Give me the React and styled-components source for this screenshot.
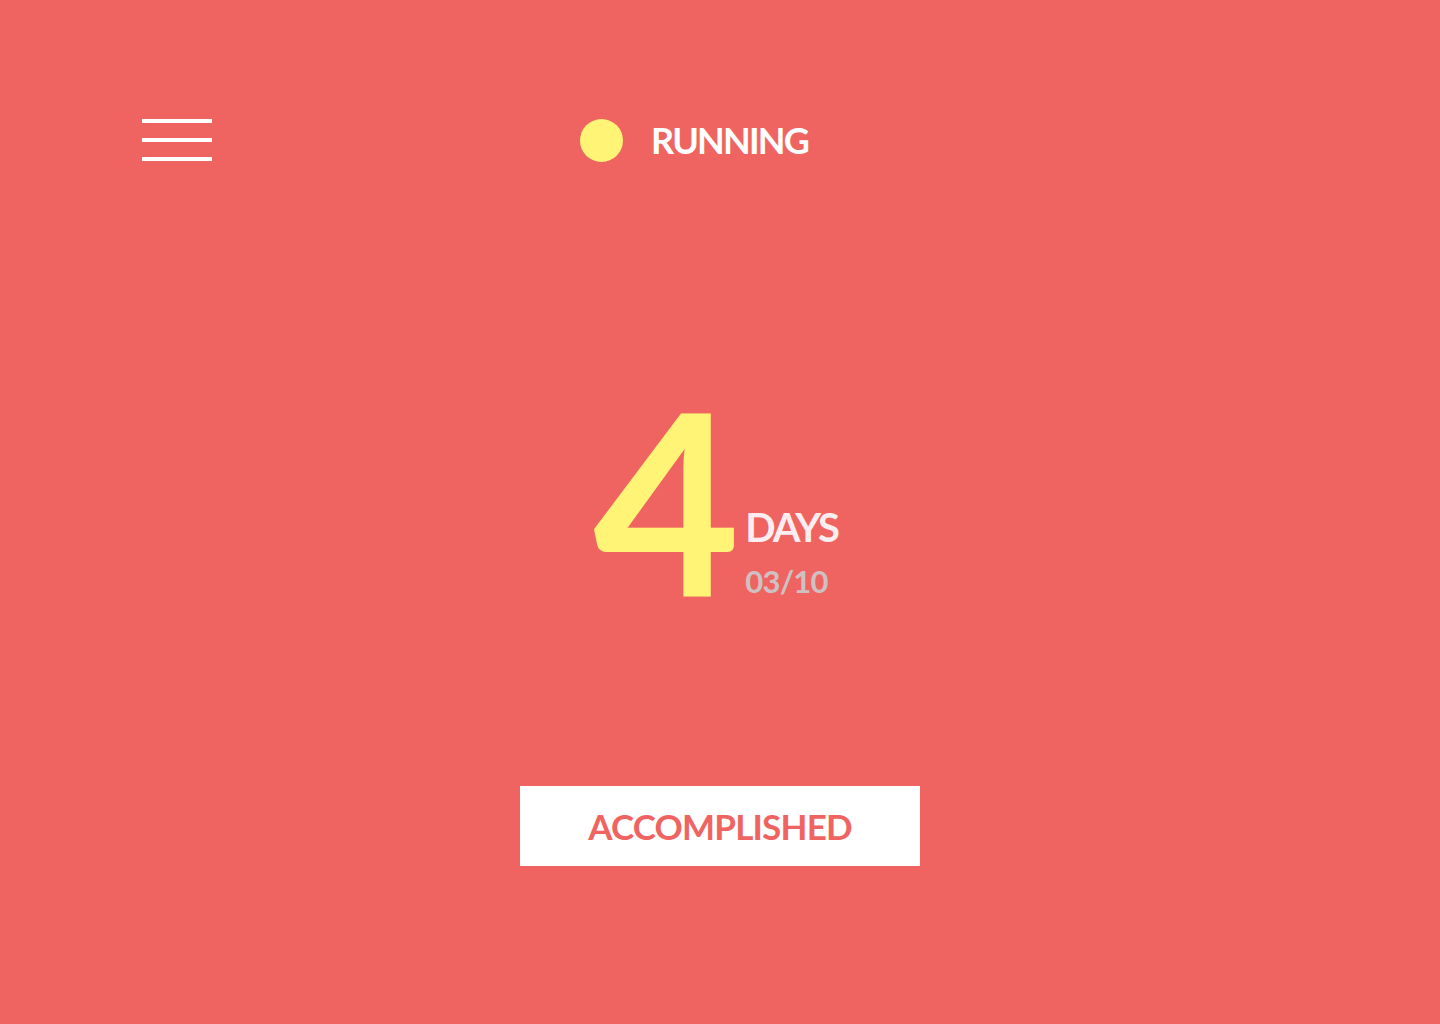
import React from "react";
import styled, { createGlobalStyle } from "styled-components";

const Global = createGlobalStyle`
  html, body { margin: 0; padding: 0; background: #EF6461; }
  body { font-family: "Lato", "Open Sans", sans-serif; }
`;

const Page = styled.div`
  width: 1440px;
  height: 1024px;
  background: #EF6461;
  display: flex;
  flex-direction: column;
  box-sizing: border-box;
  padding: 119px 0 0 142px;
`;

const Header = styled.header`
  display: flex;
  align-items: center;
  height: 42px;
`;

const Burger = styled.button`
  width: 70px;
  height: 42px;
  padding: 0;
  border: 0;
  background: none;
  display: flex;
  flex-direction: column;
  justify-content: space-between;
  cursor: pointer;
`;

const Bar = styled.span`
  display: block;
  width: 70px;
  height: 4px;
  background: #fff;
`;

const Status = styled.div`
  display: flex;
  align-items: center;
  margin-left: 368px;
  gap: 28px;
`;

const Dot = styled.span`
  width: 43px;
  height: 43px;
  border-radius: 50%;
  background: #FFF476;
`;

const StatusLabel = styled.span`
  color: #fff;
  font-weight: 700;
  font-size: 36px;
  letter-spacing: -1.8px;
`;

const Counter = styled.section`
  display: flex;
  align-items: flex-end;
  margin-top: 243px;
  margin-left: 451px;
  gap: 9px;
`;

const Big = styled.div`
  color: #FFF476;
  font-weight: 700;
  font-size: 254px;
  line-height: 190px;
  height: 190px;
  letter-spacing: -4px;
`;

const Meta = styled.div`
  display: flex;
  flex-direction: column;
  margin-bottom: -7px;
`;

const Days = styled.span`
  color: #FCEEF0;
  font-weight: 700;
  font-size: 40px;
  line-height: 50px;
  letter-spacing: -2.2px;
`;

const Progress = styled.span`
  color: #CFC1C2;
  font-weight: 700;
  font-size: 31px;
  line-height: 40px;
  margin-top: 9px;
  letter-spacing: -0.8px;
`;

const Action = styled.button`
  align-self: flex-start;
  margin-left: 378px;
  margin-top: 192px;
  width: 400px;
  height: 80px;
  background: #fff;
  border: 0;
  color: #EF6461;
  font-family: "Lato", sans-serif;
  font-weight: 700;
  font-size: 35px;
  letter-spacing: -0.8px;
  cursor: pointer;
`;

export default function App() {
  return (
    <>
      <Global />
      <Page>
        <Header>
          <Burger aria-label="menu">
            <Bar />
            <Bar />
            <Bar />
          </Burger>
          <Status>
            <Dot />
            <StatusLabel>RUNNING</StatusLabel>
          </Status>
        </Header>
        <Counter>
          <Big>4</Big>
          <Meta>
            <Days>DAYS</Days>
            <Progress>03/10</Progress>
          </Meta>
        </Counter>
        <Action>ACCOMPLISHED</Action>
      </Page>
    </>
  );
}
